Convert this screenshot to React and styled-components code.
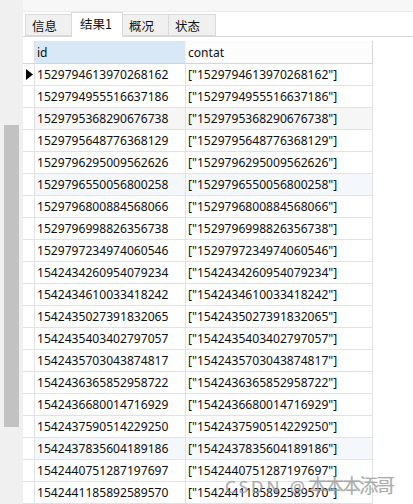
import React from 'react';
import styled, { createGlobalStyle } from 'styled-components';

const Global = createGlobalStyle`
  html, body { margin: 0; padding: 0; background: #fff; }
  body { font-family: "Noto Sans", "Noto Sans CJK SC", sans-serif; color: #111; }
  #root { width: 413px; height: 504px; overflow: hidden; }
`;

const Page = styled.div`
  position: relative;
  display: flex;
  width: 413px;
  height: 504px;
  overflow: hidden;
  background: #fff;
`;

const SideStrip = styled.div`
  flex: none;
  width: 23px;
  background: #f0f0f0;
  display: flex;
  flex-direction: column;
  align-items: center;
`;

const Thumb = styled.div`
  margin-top: 125px;
  width: 15px;
  height: 302px;
  background: #c2c2c2;
`;

const Main = styled.div`
  flex: 1;
  min-width: 0;
  display: flex;
  flex-direction: column;
`;

const TopBar = styled.div`
  height: 12px;
  background: #f7f7f7;
  border-bottom: 1px solid #ececec;
`;

const TabBar = styled.div`
  display: flex;
  align-items: flex-end;
  height: 24px;
  padding-left: 2px;
  border-bottom: 1px solid #d9d9d9;
`;

const Tab = styled.div`
  box-sizing: border-box;
  width: ${p => p.$w}px;
  height: ${p => (p.$active ? 25 : 22)}px;
  margin-bottom: ${p => (p.$active ? -1 : 0)}px;
  margin-left: ${p => (p.$first ? 0 : -1)}px;
  padding: ${p => (p.$active ? '3px 0 0 8px' : '3px 0 0 6px')};
  border: 1px solid #d9d9d9;
  border-bottom: ${p => (p.$active ? 'none' : '1px solid #d9d9d9')};
  background: ${p => (p.$active ? '#fff' : '#f0f0f0')};
  font-family: "Noto Sans CJK SC", sans-serif;
  font-size: 12.5px;
  line-height: 16px;
  color: #111;
  position: relative;
  z-index: ${p => (p.$active ? 1 : 0)};
`;

const Spacer = styled.div`
  height: 5px;
`;

const Table = styled.div`
  display: flex;
  flex-direction: column;
`;

const Row = styled.div`
  display: flex;
  height: ${p => (p.$header ? 23 : 22)}px;
  background: #fff;
`;

const Cell = styled.div`
  box-sizing: border-box;
  flex: none;
  width: ${p => p.$w}px;
  height: 100%;
  display: flex;
  align-items: center;
  padding-left: ${p => p.$pad ?? 2}px;
  border-right: 1px solid ${p => p.$line || '#e2e2e2'};
  border-bottom: 1px solid ${p => p.$bline || '#e2e2e2'};
  background: ${p => p.$bg || 'transparent'};
  font-size: 12.1px;
  white-space: nowrap;
  overflow: hidden;
  color: #0d0d0d;
`;

const Marker = styled.svg`
  display: block;
  margin-left: 3px;
`;

const Watermark = styled.div`
  position: absolute;
  left: 225px;
  top: 471px;
  z-index: 5;
  display: flex;
  align-items: baseline;
  white-space: nowrap;
  pointer-events: none;
  color: rgba(160, 160, 160, 0.75);
  text-shadow: 0 0 1px rgba(90, 90, 90, 0.3);
`;

const MarkLatin = styled.span`
  font-family: "Noto Sans", sans-serif;
  font-size: 17px;
  letter-spacing: 3px;
`;

const MarkCjk = styled.span`
  font-family: "Noto Sans CJK SC", sans-serif;
  font-size: 19px;
  letter-spacing: -2px;
`;

const ids = [
  '1529794613970268162',
  '1529794955516637186',
  '1529795368290676738',
  '1529795648776368129',
  '1529796295009562626',
  '1529796550056800258',
  '1529796800884568066',
  '1529796998826356738',
  '1529797234974060546',
  '1542434260954079234',
  '1542434610033418242',
  '1542435027391832065',
  '1542435403402797057',
  '1542435703043874817',
  '1542436365852958722',
  '1542436680014716929',
  '1542437590514229250',
  '1542437835604189186',
  '1542440751287197697',
  '1542441185892589570',
];

const rowTint = { 2: '#f6f6f6', 5: '#f4f8fc', 17: '#f4f8fc' };

const tabs = [
  { label: '信息', w: 47 },
  { label: '结果1', w: 52, active: true },
  { label: '概况', w: 47 },
  { label: '状态', w: 48 },
];

export default function App() {
  return (
    <>
      <Global />
      <Page>
        <SideStrip>
          <Thumb />
        </SideStrip>
        <Main>
          <TopBar />
          <TabBar>
            {tabs.map((t, i) => (
              <Tab key={t.label} $w={t.w} $active={t.active} $first={i === 0}>
                {t.label}
              </Tab>
            ))}
          </TabBar>
          <Spacer />
          <Table>
            <Row $header>
              <Cell $w={12} $line="#e2e2e2" $bline="#d6d6d6" $pad={0} />
              <Cell $w={151} $bg="#d9e8f7" $line="#f4f4f4" $bline="#d6d6d6">id</Cell>
              <Cell $w={187} $bg="#fcfcfc" $line="#d6d6d6" $bline="#d6d6d6">contat</Cell>
            </Row>
            {ids.map((id, i) => (
              <Row key={id}>
                <Cell $w={12} $pad={0}>
                  {i === 0 && (
                    <Marker width="7" height="11" viewBox="0 0 7 11">
                      <polygon points="0,0 7,5.5 0,11" fill="#000" />
                    </Marker>
                  )}
                </Cell>
                <Cell $w={151} $bg={rowTint[i]}>{id}</Cell>
                <Cell $w={187} $bg={rowTint[i]}>["{id}"]</Cell>
              </Row>
            ))}
          </Table>
        </Main>
        <Watermark>
          <MarkLatin>CSDN @</MarkLatin>
          <MarkCjk>本本本添哥</MarkCjk>
        </Watermark>
      </Page>
    </>
  );
}
